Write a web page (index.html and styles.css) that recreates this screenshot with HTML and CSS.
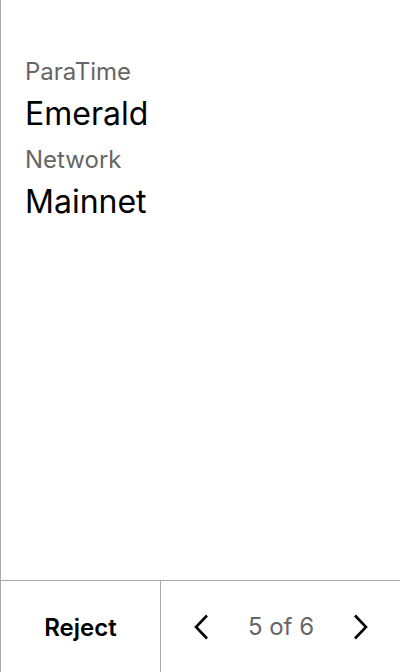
FILE: index.html
```html
<!DOCTYPE html>
<html>
<head>
<meta charset="utf-8">
<link rel="stylesheet" href="styles.css">
</head>
<body>
<div class="screen">
  <div class="content">
    <div class="label">ParaTime</div>
    <div class="value">Emerald</div>
    <div class="label">Network</div>
    <div class="value">Mainnet</div>
  </div>
  <div class="footer">
    <div class="reject">Reject</div>
    <div class="pager">
      <svg class="chev" width="20" height="28" viewBox="0 0 20 28"><path d="M16 2.5 L5 14 L16 25.5" fill="none" stroke="#000" stroke-width="2.6"/></svg>
      <span class="count">5 of 6</span>
      <svg class="chev" width="20" height="28" viewBox="0 0 20 28"><path d="M4 2.5 L15 14 L4 25.5" fill="none" stroke="#000" stroke-width="2.6"/></svg>
    </div>
  </div>
</div>
</body>
</html>
```
FILE: styles.css
```css
html, body { margin: 0; padding: 0; background: #fff; }
body { font-family: Inter, "Noto Sans", sans-serif; }
.screen {
  width: 399px; height: 672px;
  border-left: 1px solid #a8a8a8;
  display: flex; flex-direction: column;
}
.content { flex: 1; padding: 56px 0 0 24px; }
.label { font-size: 24px; color: #666; line-height: 32px; }
.value { font-size: 32px; color: #000; line-height: 40px; margin: 6px 0 10px; }
.footer {
  height: 91px; border-top: 1px solid #a8a8a8;
  display: flex;
}
.reject {
  width: 159px; border-right: 1px solid #a8a8a8;
  display: flex; align-items: center; justify-content: center;
  padding-top: 2px;
  font-size: 24px; font-weight: 600; color: #000;
}
.pager {
  flex: 1; display: flex; align-items: center; justify-content: space-between;
  padding: 0 29px 0 30px;
}
.count { font-size: 24px; color: #666; }
```
